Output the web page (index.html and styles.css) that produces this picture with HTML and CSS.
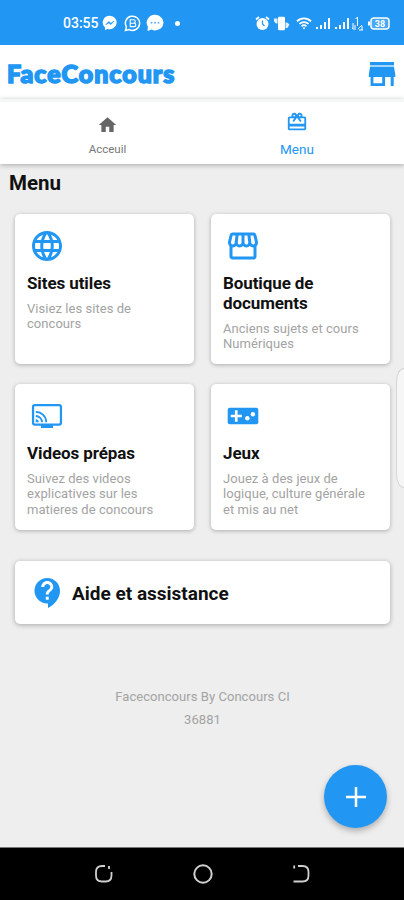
FILE: index.html
```html
<!DOCTYPE html>
<html lang="fr">
<head>
    <meta charset="UTF-8">
    <meta name="viewport" content="width=device-width, initial-scale=1.0">
    <title>FaceConcours</title>
    <link rel="stylesheet" href="styles.css">
</head>
<body>
    <div class="statusbar">
        <div class="status-left">
            <span class="time">03:55</span>
            <svg width="16" height="16" viewBox="0 0 16 16"><path d="M8 .8a7.1 6.7 0 0 0-5 11.6V15l2.5-1.1A7.1 6.7 0 1 0 8 .8z" fill="#fff"/><path d="M3.8 9.7l3-3.2 2 1.7 3.2-2-3.1 3.4-2-1.7z" fill="#2196f3" stroke="#2196f3" stroke-width=".6"/></svg>
            <svg class="whatsapp" width="17" height="17" viewBox="0 0 17 17" fill="none" stroke="#fff"><path d="M1.5 15.5l.9-3.6A7.1 7.1 0 1 1 5.3 14.6z" stroke-width="1.5"/><path d="M6.2 4.8h3.4a1.7 1.7 0 0 1 0 3.4H6.2zM6.2 8.2h3.9a1.7 1.7 0 0 1 0 3.4H6.2z" stroke-width="1.1"/></svg>
            <svg class="chat" width="18" height="18" viewBox="0 0 18 18"><path d="M9 .8a8.2 7.8 0 0 0-7.2 11.7L1.6 17l4-1.4A8.2 7.8 0 1 0 9 .8z" fill="#fff"/><g fill="#64b5f6"><circle cx="5.5" cy="8.8" r="1"/><circle cx="9" cy="8.8" r="1"/><circle cx="12.5" cy="8.8" r="1"/></g></svg>
            <span class="dot"></span>
        </div>
        <div class="status-right">
            <svg width="15" height="15" viewBox="0 0 15 15"><circle cx="7.5" cy="8" r="6" fill="#fff"/><path d="M1 3.5l3-2.5M14 3.5L11 1" stroke="#fff" stroke-width="1.8"/><path d="M7.5 4.5V8l2 2" fill="none" stroke="#2196f3" stroke-width="1.2"/></svg>
            <svg class="vibrate" width="17" height="15" viewBox="0 0 17 15" fill="#fff"><rect x="5" y=".8" width="7" height="13.5" rx="1.2"/><path d="M1 2.500h3.500v5H3L1 5.500zM12.500 6.500H14l2.500 2-2 3.500h-2z" opacity=".85"/></svg>
            <svg class="wifi" width="16" height="13" viewBox="0 0 16 13" fill="none" stroke="#fff" stroke-width="1.8"><path d="M1 4.3a10 10 0 0 1 14 0M3.4 6.9a6.6 6.6 0 0 1 9.2 0M5.6 9.3a3.5 3.5 0 0 1 4.8 0"/><path d="M8 12.5L6.5 10.5h3z" fill="#fff" stroke="none"/></svg>
            <svg class="signal" width="16" height="13" viewBox="0 0 16 13" fill="#fff"><path d="M1 10h2v2H1zM5 8h2v4H5zM9 5h2v7H9zM13 1h2v11h-2z"/></svg>
            <svg class="signal" width="16" height="13" viewBox="0 0 16 13" fill="#fff"><path d="M1 10h2v2H1zM5 8h2v4H5zM9 5h2v7H9zM13 1h2v11h-2z"/></svg>
            <svg class="data" width="13" height="15" viewBox="0 0 13 15" fill="none" stroke="#fff"><path d="M6.5 1v9M4.5 3l2-2M2 7v6M1 12l1.500 1.500M4 9v5M7 13l4-4M8 14h4M11 10v4"/></svg>
            <svg class="battery" width="23" height="13" viewBox="0 0 23 13"><path d="M1 4.5h2v4H1z" fill="#fff"/><rect x="4" y="1" width="18" height="11" rx="3" fill="#90caf9" fill-opacity=".35" stroke="#fff" stroke-width="1.5"/><text x="13" y="9.8" class="battery-text">38</text></svg>
        </div>
    </div>

    <header class="header">
        <div class="logo">FaceConcours</div>
        <svg class="store" width="28" height="26" viewBox="0 0 28 26" fill="#2196f3"><path d="M2 1h24v3H2z"/><path d="M2 4h24v2H2z" opacity=".4"/><path d="M2 6h24l1.300 7.500V16h-1.600v9h-3v-9h-5.600v9H2.600v-9H.8v-2.500zM5.400 16v6.200h8.800V16z"/></svg>
    </header>

    <nav class="tabs">
        <a class="tab">
            <svg width="21" height="22" viewBox="0 0 24 24" fill="#666"><path d="M10 20v-6h4v6h5v-8h3L12 3 2 12h3v8z"/></svg>
            <span>Acceuil</span>
        </a>
        <a class="tab active">
            <svg width="22" height="22" viewBox="0 0 24 24" fill="#2196f3"><path d="M20 6h-2.18c.11-.31.18-.65.18-1 0-1.66-1.34-3-3-3-1.05 0-1.96.54-2.5 1.35l-.5.67-.5-.68C10.96 2.54 10.05 2 9 2 7.34 2 6 3.34 6 5c0 .35.07.69.18 1H4c-1.11 0-1.99.89-1.99 2L2 19c0 1.11.89 2 2 2h16c1.11 0 2-.89 2-2V8c0-1.11-.89-2-2-2zm-5-2c.55 0 1 .45 1 1s-.45 1-1 1-1-.45-1-1 .45-1 1-1zM9 4c.55 0 1 .45 1 1s-.45 1-1 1-1-.45-1-1 .45-1 1-1zm11 15H4v-2h16v2zm0-5H4V8h5.08L7 10.83 8.62 12 11 8.76l1-1.36 1 1.36L15.38 12 17 10.83 14.92 8H20v6z"/></svg>
            <span>Menu</span>
        </a>
    </nav>

    <main class="content">
        <h1>Menu</h1>
        <div class="cards">
            <div class="card">
                <svg class="icon" viewBox="0 0 24 24"><path d="M11.99 2C6.47 2 2 6.48 2 12s4.47 10 9.99 10C17.52 22 22 17.52 22 12S17.52 2 11.99 2zm6.93 6h-2.95c-.32-1.25-.78-2.45-1.38-3.56 1.84.63 3.37 1.91 4.33 3.56zM12 4.04c.83 1.2 1.48 2.53 1.91 3.96h-3.82c.43-1.43 1.08-2.76 1.91-3.96zM4.26 14C4.1 13.36 4 12.69 4 12s.1-1.36.26-2h3.38c-.08.66-.14 1.32-.14 2 0 .68.06 1.34.14 2H4.26zm.82 2h2.95c.32 1.25.78 2.45 1.38 3.56-1.84-.63-3.37-1.9-4.33-3.56zm2.95-8H5.08c.96-1.66 2.49-2.93 4.33-3.56C8.81 5.55 8.35 6.75 8.03 8zM12 19.96c-.83-1.2-1.48-2.53-1.91-3.96h3.82c-.43 1.43-1.08 2.76-1.91 3.96zM14.34 14H9.66c-.09-.66-.16-1.32-.16-2 0-.68.07-1.35.16-2h4.68c.09.65.16 1.32.16 2 0 .68-.07 1.34-.16 2zm.25 5.56c.6-1.11 1.06-2.31 1.38-3.56h2.95c-.96 1.65-2.49 2.93-4.33 3.56zM16.36 14c.08-.66.14-1.32.14-2 0-.68-.06-1.34-.14-2h3.38c.16.64.26 1.31.26 2s-.1 1.36-.26 2h-3.38z"/></svg>
                <h2>Sites utiles</h2>
                <p>Visiez les sites de<br>concours</p>
            </div>
            <div class="card">
                <svg class="icon" viewBox="0 0 24 24"><path d="M21.9 8.89l-1.05-4.37c-.22-.9-1-1.52-1.91-1.52H5.05c-.9 0-1.69.63-1.9 1.52L2.1 8.89c-.24 1.02-.02 2.06.62 2.88.08.11.19.19.28.29V19c0 1.1.9 2 2 2h14c1.1 0 2-.9 2-2v-6.94c.09-.09.2-.18.28-.28.64-.82.87-1.87.62-2.89zm-2.99-3.9l1.05 4.37c.1.42.01.84-.25 1.17-.14.18-.44.47-.94.47-.61 0-1.14-.49-1.21-1.14L16.98 5l1.93-.01zM13 5h1.96l.54 4.52c.05.39-.07.78-.33 1.07-.22.26-.54.41-.95.41-.67 0-1.22-.59-1.22-1.31V5zM8.49 9.52L9.04 5H11v4.69c0 .72-.55 1.31-1.29 1.31-.34 0-.65-.15-.89-.41-.25-.29-.37-.68-.33-1.07zm-4.45-.16L5.05 5h1.97l-.58 4.86c-.08.65-.6 1.14-1.21 1.14-.49 0-.8-.29-.93-.47-.27-.32-.36-.75-.26-1.17zM5 19v-6.03c.08.01.15.03.23.03.87 0 1.66-.36 2.24-.95.6.6 1.4.95 2.31.95.87 0 1.65-.36 2.23-.93.59.57 1.39.93 2.29.93.84 0 1.64-.35 2.24-.95.58.59 1.37.95 2.24.95.08 0 .15-.02.23-.03V19H5z"/></svg>
                <h2>Boutique de<br>documents</h2>
                <p>Anciens sujets et cours<br>Numériques</p>
            </div>
            <div class="card">
                <svg class="icon" viewBox="0 0 24 24"><g fill="none" stroke="#2196f3"><rect x="2.700" y="4.700" width="18.600" height="13" rx="1.200" stroke-width="1.500"/><path d="M4.500 9.200a7 7 0 0 1 7 7M4.500 12a4.200 4.200 0 0 1 4.200 4.200" stroke-width="1.200"/></g><path d="M4.500 14.200a2 2 0 0 1 2 2h-2zM8 18h8v2H8z"/></svg>
                <h2>Videos prépas</h2>
                <p>Suivez des videos<br>explicatives sur les<br>matieres de concours</p>
            </div>
            <div class="card">
                <svg class="icon" viewBox="0 0 24 24"><rect x="1.800" y="6.500" width="20.400" height="11" rx="1.400"/><g fill="#fff"><path d="M6.600 8.200h1.800v2.900h2.800v1.800H8.400v2.900H6.600v-2.900H3.800v-1.800h2.800z"/><circle cx="14.900" cy="13.500" r="1.500"/><circle cx="18.600" cy="10.800" r="1.500"/></g></svg>
                <h2>Jeux</h2>
                <p>Jouez à des jeux de<br>logique, culture générale<br>et mis au net</p>
            </div>
        </div>
        <div class="help">
            <svg class="icon" viewBox="0 0 24 24"><path d="M11.5 2C6.81 2 3 5.81 3 10.5S6.81 19 11.5 19h.5v3c4.86-2.34 8-7 8-11.5C20 5.81 16.19 2 11.5 2zm1 14.5h-2v-2h2v2zm0-3.5h-2c0-3.25 3-3 3-5 0-1.1-.9-2-2-2s-2 .9-2 2h-2c0-2.21 1.79-4 4-4s4 1.79 4 4c0 2.5-3 2.75-3 5z"/></svg>
            <span>Aide et assistance</span>
        </div>
        <footer class="footer">
            <div>Faceconcours By Concours CI</div>
            <div>36881</div>
        </footer>
    </main>

    <div class="navbar">
        <svg width="20" height="20" viewBox="0 0 20 20" fill="none" stroke="#d0d0d0" stroke-width="1.8"><path d="M11 2H8Q2 2 2 8v3.500Q2 17.500 8 17.500h3.500q6 0 6-6V8M15 2v3"/></svg>
        <svg width="22" height="22" viewBox="0 0 22 22" fill="none" stroke="#d0d0d0" stroke-width="2"><circle cx="11" cy="11" r="8.700"/></svg>
        <svg width="20" height="20" viewBox="0 0 20 20" fill="none" stroke="#d0d0d0" stroke-width="1.800"><path d="M7 2h4.500q6 0 6 6v3.500q0 6-6 6H2.500M3.200 1.500v3"/></svg>
    </div>

    <div class="edge-handle"></div>
    <button class="fab">
        <svg width="20" height="20" viewBox="0 0 20 20" stroke="#fff" stroke-width="2.500"><path d="M10 0v20M0 10h20"/></svg>
    </button>
</body>
</html>
```
FILE: styles.css
```css
body {
    margin: 0;
    width: 404px;
    height: 900px;
    position: relative;
    overflow: hidden;
    display: flex;
    flex-direction: column;
    background-color: #eeeeee;
    font-family: Roboto, sans-serif;
}

svg {
    display: block;
    flex-shrink: 0;
}

.statusbar {
    height: 45px;
    box-sizing: border-box;
    padding: 1px 13px 0 63px;
    display: flex;
    justify-content: space-between;
    align-items: center;
    background-color: #2196f3;
    color: #fff;
}

.status-left,
.status-right {
    display: flex;
    align-items: center;
}

.status-right {
    margin-right: 1px;
}

.time {
    width: 39px;
    font-size: 14px;
    font-weight: 500;
}

.whatsapp {
    margin-left: 6px;
}

.chat {
    margin-left: 5px;
}

.dot {
    width: 5px;
    height: 5px;
    margin-left: 11px;
    border-radius: 50%;
    background-color: #fff;
}

.vibrate {
    margin-left: 3px;
}

.wifi {
    margin-left: 6px;
}

.signal {
    margin-left: 3px;
}

.data {
    margin-left: 1px;
}

.battery {
    margin-left: 3px;
}

.battery-text {
    font-size: 9px;
    font-weight: bold;
    fill: #fff;
    text-anchor: middle;
}

.header {
    height: 54px;
    box-sizing: border-box;
    padding: 3px 8px 0 7px;
    display: flex;
    justify-content: space-between;
    align-items: center;
    background-color: #fff;
}

.logo {
    margin-bottom: 2px;
    font-family: Lato, sans-serif;
    font-size: 25px;
    font-weight: 900;
    letter-spacing: 1px;
    color: #2196f3;
    -webkit-text-stroke: 1.6px #2196f3;
}

.tabs {
    height: 65px;
    box-sizing: border-box;
    border-top: 3px solid #f5f6f6;
    display: flex;
    background-color: #fff;
    box-shadow: 0 1px 5px rgba(0, 0, 0, 0.3);
}

.tab {
    width: 50%;
    padding: 12px 0 0 13px;
    box-sizing: border-box;
    display: flex;
    flex-direction: column;
    align-items: center;
    font-size: 11.5px;
    color: #777;
}

.tab span {
    margin-top: 6px;
}

.tab.active {
    padding: 9px 12px 0 0;
    font-size: 13.5px;
    color: #2196f3;
}

.tab.active span {
    margin-top: 8px;
}

.content {
    flex: 1;
    padding: 7px 14px 0 15px;
}

h1 {
    margin: 0 0 0 -6px;
    font-size: 20.5px;
    line-height: 24px;
    font-weight: bold;
    color: #111;
}

.cards {
    margin-top: 18.5px;
    display: grid;
    grid-template-columns: 179px 179px;
    grid-template-rows: 150px 146px;
    gap: 20px 17px;
}

.card {
    padding: 14px 12px 0;
    background-color: #fff;
    border-radius: 5px;
    box-shadow: 0 1px 4px rgba(0, 0, 0, 0.28);
}

.icon {
    width: 36px;
    height: 36px;
    margin-left: 2px;
    fill: #2196f3;
}

.card h2 {
    margin: 9px 0 0;
    font-size: 17px;
    line-height: 20px;
    font-weight: bold;
    letter-spacing: -0.1px;
    color: #111;
}

.card p {
    margin: 8px 0 0;
    font-size: 13px;
    line-height: 15.7px;
    letter-spacing: 0.05px;
    color: #a3a3a3;
    white-space: nowrap;
}

.help {
    height: 63px;
    margin-top: 31.5px;
    padding-left: 13px;
    display: flex;
    align-items: center;
    background-color: #fff;
    border-radius: 5px;
    box-shadow: 0 1px 5px rgba(0, 0, 0, 0.3);
    font-size: 19px;
    font-weight: bold;
    color: #111;
}

.help span {
    margin: 1px 0 0 6px;
}

.footer {
    margin-top: 61px;
    text-align: center;
    font-size: 13px;
    line-height: 23px;
    letter-spacing: 0.05px;
    color: #a3a3a3;
}

.navbar {
    height: 53px;
    box-sizing: border-box;
    border-top: 1px solid #777;
    padding: 0 93px 0 94px;
    display: flex;
    justify-content: space-between;
    align-items: center;
    background-color: #000;
}

.edge-handle {
    position: absolute;
    top: 368px;
    right: 0;
    width: 8px;
    height: 120px;
    box-sizing: border-box;
    border: 1px solid #d5d5d5;
    border-right: none;
    border-radius: 8px 0 0 8px / 14px 0 0 14px;
    background-color: #f6f6f6;
}

.fab {
    position: absolute;
    top: 765px;
    left: 324px;
    width: 63px;
    height: 63px;
    padding: 0;
    display: flex;
    justify-content: center;
    align-items: center;
    border: none;
    border-radius: 50%;
    background-color: #2196f3;
    box-shadow: 0 3px 6px rgba(0, 0, 0, 0.28);
}
```
